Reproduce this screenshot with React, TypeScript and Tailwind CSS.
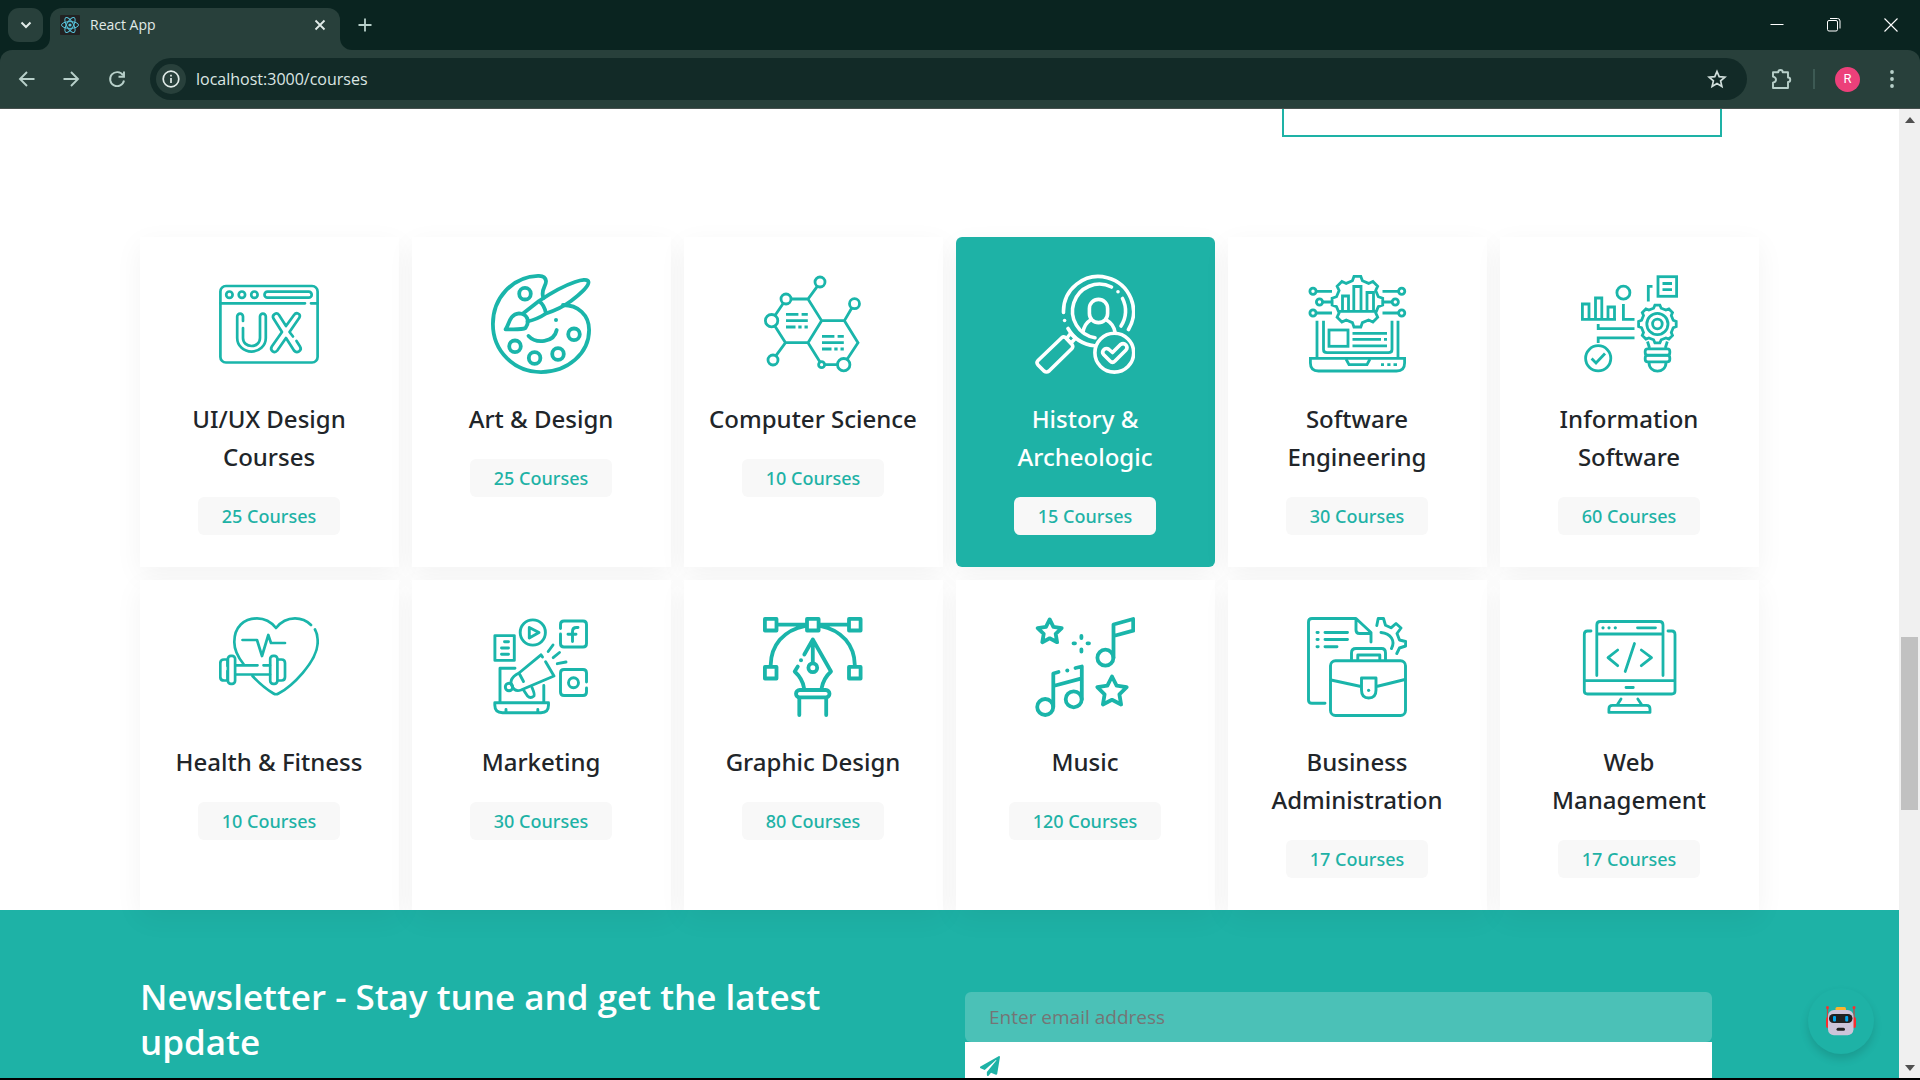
import type { ReactNode } from "react";

function gearPath(cx: number, cy: number, outer: number, inner: number, teeth: number) {
  const step = (Math.PI * 2) / teeth;
  const points: string[] = [];
  for (let i = 0; i < teeth; i++) {
    const a = i * step - Math.PI / 2;
    const corners: [number, number][] = [
      [inner, a - step * 0.3],
      [outer, a - step * 0.17],
      [outer, a + step * 0.17],
      [inner, a + step * 0.3],
    ];
    for (const [r, t] of corners) {
      points.push(`${(cx + r * Math.cos(t)).toFixed(1)} ${(cy + r * Math.sin(t)).toFixed(1)}`);
    }
  }
  return `M${points.join("L")}Z`;
}

function starPath(cx: number, cy: number, outer: number) {
  const points: string[] = [];
  for (let i = 0; i < 10; i++) {
    const r = i % 2 ? outer * 0.5 : outer;
    const t = (i * Math.PI) / 5 - Math.PI / 2;
    points.push(`${(cx + r * Math.cos(t)).toFixed(1)} ${(cy + r * Math.sin(t)).toFixed(1)}`);
  }
  return `M${points.join("L")}Z`;
}

function Art({ width, square, children }: { width: number; square?: boolean; children: ReactNode }) {
  return (
    <svg
      viewBox="0 0 100 100"
      className="size-[100px]"
      fill="none"
      stroke="currentColor"
      strokeWidth={width}
      strokeLinecap={square ? "butt" : "round"}
      strokeLinejoin={square ? "miter" : "round"}
      aria-hidden="true"
    >
      {children}
    </svg>
  );
}

const Dot = ({ x, y, r = 1.8 }: { x: number; y: number; r?: number }) => (
  <circle cx={x} cy={y} r={r} fill="currentColor" stroke="none" />
);

const UxIcon = () => (
  <Art width={2.7}>
    <rect x="1.4" y="12" width="97.2" height="76.5" rx="5.5" />
    <path d="M1.4 29.3H86M92 29.3H98.6" />
    <circle cx="10.4" cy="20.7" r="3.2" />
    <circle cx="22.9" cy="20.7" r="3.2" />
    <circle cx="35.4" cy="20.7" r="3.2" />
    <rect x="45.5" y="17.7" width="47.2" height="6" rx="3" />
    <path d="M24 47V42.5a2.9 2.9 0 0 0-5.8 0V64C18.2 72 25 77.6 32.5 77.6S46.8 72 46.8 64V42.5a2.9 2.9 0 0 0-5.8 0V64C41 69 37 72 32.5 72S24 69 24 64V54" />
    <path d="M67 52L60 41C57.5 37.5 52.5 41 54.5 44.5L63 58L52.8 72.5C50.5 76.5 55.5 80 58.3 76.5L67 64L75 76.5C78 80 83.5 76.5 81 72.5L77.5 67M74 62.5L70.5 58L80.5 43.5C82 40 77.5 37.5 75 41L67 52" />
  </Art>
);

const PaletteIcon = () => (
  <Art width={3.8}>
    <path d="M52.5 24C49 16 55.5 12 55 7C54.5 3 51 1.8 47 1.9C21 3 1.9 24 1.9 50C1.9 77 23 98.1 50 98.1C77 98.1 98.1 79 98.1 56C98.1 41 87 31 72 31" />
    <circle cx="34" cy="19.7" r="5.8" />
    <circle cx="24" cy="72.3" r="5.8" />
    <circle cx="43.6" cy="84" r="5.8" />
    <circle cx="67" cy="80" r="5.8" />
    <circle cx="83" cy="60.3" r="5.8" />
    <path d="M37.5 62C45 70 63 69 65.7 56" />
    <Dot x={65} y={46} r={2} />
    <path d="M14.5 55.3C18 52 18 40 28 39.3C36 39.5 39.5 47 34.5 54C31 56 21 55.3 14.5 55.3Z" />
    <path d="M32 39.5L48 27C52 30 54 34 55 39.5C49 43.5 43 46 36.5 47.5M48 27C60 19 72 12 84 8C90 6 97 4.5 97.5 8C98 12 88 21 80 27C72 33 64 36.5 55 39.5" />
  </Art>
);

const MoleculeIcon = () => (
  <Art width={2.8} square>
    <circle cx="57" cy="8" r="5" />
    <circle cx="91.5" cy="29.7" r="5" />
    <circle cx="23" cy="25" r="5" />
    <circle cx="8.6" cy="46.7" r="6.2" />
    <circle cx="10" cy="86" r="5" />
    <circle cx="58.6" cy="90.7" r="3" />
    <circle cx="80.7" cy="90.7" r="6.2" />
    <path d="M28 25H45L54.3 12.3M45 25L58.6 46.7H81.4L88.8 34M81.4 46.7L95 68.7L84 85.5M58.6 46.7L45 68.7L57 88M45 68.7H22.5L12.8 81.8M22.5 68.7L12 52.2M12 41.5L20.3 29.3M61.5 90.7H74.5" />
    <path d="M23 40.3H35.4M38.6 40.3H44.8M23 46.7H44.8M23 53H32.5M35.3 53H38.6M41.5 53H44.8" />
    <path d="M59 62.3H71.4M74.6 62.3H80.8M59 68.7H80.8M59 75H68.5M71.3 75H74.6M77.5 75H80.8" />
  </Art>
);

const MagnifierIcon = () => (
  <Art width={3.6}>
    <path d="M28.5 38.5A35 35 0 1 1 93.5 55.5M33 54.5A35 35 0 0 0 59.5 71.8" />
    <path d="M76.5 13A27 27 0 1 0 60 63.8M87.5 24.5A27 27 0 0 1 86 52" />
    <Dot x={29.6} y={46.5} />
    <Dot x={83} y={17.7} />
    <rect x="54.4" y="25.4" width="18.2" height="23.2" rx="9.1" />
    <path d="M48 58C49 52 51.5 48.5 55.5 46M71.5 46C76 48.5 79 53 80 58" />
    <path d="M27 63.5Q29 62 31 64L37 70.5Q38.5 72.5 37 74.5L14 97Q11.5 99 9 97L3 91Q1 88.5 3 86.5Z" />
    <path d="M35.5 59.5L40.5 64.3L36 69L31.5 64.5Z" />
    <circle cx="79.3" cy="78.7" r="19.4" />
    <path d="M77.5 78.5L85.5 70.5Q88.5 68.5 91 71Q93 73.5 91 76L80 87Q77.5 89.5 75 87L68.5 80.5Q66.5 78 69 75.5Q71.5 73.5 74 75.5Z" />
  </Art>
);

const EngineeringIcon = () => (
  <Art width={2.8} square>
    <path d={gearPath(50.4, 27.7, 25.5, 21.5, 8)} />
    <path d="M31 37.3H70M35.5 37V22H41.5V37M46.8 37V12.5H54V37M60 37V18.5H66.5V37" />
    <path d="M9.3 17.3H25M15.8 28H25M9.3 39H25M91.5 17.3H75.5M85 28H76M91.5 39H75.5" />
    <circle cx="6" cy="17.3" r="3.1" />
    <circle cx="12.5" cy="28" r="3.1" />
    <circle cx="6" cy="39" r="3.1" />
    <circle cx="94.7" cy="17.3" r="3.1" />
    <circle cx="88.3" cy="28" r="3.1" />
    <circle cx="94.7" cy="39" r="3.1" />
    <path d="M10 46.7V84M91 46.7V84M16.5 46.7V75.5Q16.5 78.7 20 78.7H81.5Q85 78.7 85 75.5V46.7" />
    <path d="M3.4 84.4H97.6V89Q97.6 97 89.5 97H11.5Q3.4 97 3.4 89Z" />
    <path d="M39 85L42 90.7H60L63 85M74 90.7H77M80.3 90.7H83.5M86.5 90.7H90" />
    <rect x="22" y="56" width="19" height="16.3" />
    <path d="M45.5 59.3H80M45.5 65.3H74M77 65.3H80M45.5 71.8H80" />
  </Art>
);

const InformationIcon = () => (
  <Art width={2.8} square>
    <path d="M2 45.4H37M3.4 45V30H10V45M16.5 45V24H22.8V45M29 45V33H35.5V45" />
    <circle cx="44.4" cy="18.7" r="6.5" />
    <path d="M44.4 30V45.4H55.5M19.2 50V54.7H55.5M19.2 69V63.9H55.5" />
    <circle cx="19.2" cy="84.3" r="12.6" />
    <path d="M12.6 84.5L17 89L26 79.5" />
    <rect x="79" y="2.7" width="18.6" height="19.6" />
    <path d="M83.5 9.5H93M83.5 15.7H93M73.5 12.3H69.3V27.5" />
    <path d={gearPath(78.4, 50, 19, 16.3, 8)} />
    <circle cx="78.4" cy="50" r="10.6" />
    <circle cx="78.4" cy="50" r="4.8" />
    <path d="M68.5 67.5L70.5 74M88.3 67.5L86.3 74" />
    <rect x="66.2" y="74.8" width="24.6" height="6.4" rx="2.5" />
    <rect x="66.2" y="81.4" width="24.6" height="6.4" rx="2.5" />
    <path d="M70 88.5C70 100 87 100 87 88.5" />
  </Art>
);

const HealthIcon = () => (
  <Art width={2.7}>
    <path d="M24.5 47C18 39 15.3 31 15.3 25C15.3 10 25 1.4 38 1.4C47 1.4 53 6 57 11C61 6 67 1.4 76 1.4C83 1.4 88 4 92 8M96 12.5C98 16 98.7 20 98.7 25C98.7 45 72 70 59.5 76.5Q57 78 54.5 76.5C47 72 40 66 33.5 59" />
    <path d="M23.5 23H38L43 39L49.3 18L52 26H66" />
    <path d="M8.5 49V42.5H5Q1.3 42.5 1.3 46V60Q1.3 63.5 5 63.5H8.5V54" />
    <rect x="8.9" y="38.8" width="7.2" height="28" rx="3" />
    <rect x="51.2" y="38.8" width="7.2" height="28" rx="3" />
    <path d="M59 42.5H62.5Q66 42.5 66 46V60Q66 63.5 62.5 63.5H59M17 48.3H38.5M44.5 48.3H51M17 57.5H51" />
  </Art>
);

const MarketingIcon = () => (
  <Art width={2.9}>
    <circle cx="41.8" cy="15.5" r="12.6" />
    <path d="M38.3 10.5L48 15.5L38.3 21Z" />
    <path d="M69.5 11.5V7.5Q69.5 4 73 4H92Q95.5 4 95.5 7.5V26.5Q95.5 30 92 30H73Q69.5 30 69.5 26.5V17" />
    <path d="M87 10.5H85.5Q81.5 10.5 81.5 14.5V24.5M77 17.3H85" />
    <path d="M3.9 18.6H23.3V43.4H3.9ZM13.5 24.7H17.5M10.5 31H17.5M10.5 37.3H17.5" />
    <path d="M24 51.3H9V85M52.8 68.5V85" />
    <path d="M3.8 85.7H57.5V88Q57.5 95.7 50 95.7H11.5Q3.8 95.7 3.8 88ZM15 92.5V95M46.8 92.5V95" />
    <path d="M51.5 40L50 37.8L28 56C20 60 17 66 23.5 72.5Q26 74.5 30 73L63 59L54.6 44.7M28.5 57L32.5 64.5" />
    <circle cx="18" cy="70" r="3.7" />
    <path d="M32.5 73L36.5 79Q39.5 82 43 79Q44 77.5 41 70.5" />
    <path d="M57.2 34.5L62 28M62.2 40.7L68.5 35.5M66.3 46.7L75 45" />
    <path d="M95.5 65V56Q95.5 52.5 92 52.5H73Q69.5 52.5 69.5 56V75Q69.5 78.5 73 78.5H92Q95.5 78.5 95.5 75V71" />
    <circle cx="82.5" cy="65.7" r="5" />
  </Art>
);

const PenIcon = () => (
  <Art width={3.8}>
    <rect x="1.9" y="1.9" width="11.6" height="11.6" />
    <rect x="44" y="1.9" width="11.6" height="11.6" />
    <rect x="86" y="1.9" width="11.6" height="11.6" />
    <rect x="1.9" y="49.9" width="11.6" height="11.6" />
    <rect x="86" y="49.9" width="11.6" height="11.6" />
    <path d="M15 7.7H43M57 7.7H85M42.5 8.8C20 13 8 29 7.7 48M57 8.8C79.5 13 91.5 29 91.8 48" />
    <path d="M41.3 37.5L49.8 22.5L68 54.5C63 59 60 64 58.7 71M41 71C40 64 36 58.5 31.7 54.5L34.8 49.5M49.8 24V45" />
    <Dot x={38} y={43.3} r={2} />
    <circle cx="49.8" cy="50.7" r="4.4" />
    <rect x="33" y="73" width="33.5" height="7.4" rx="3.7" />
    <path d="M36.3 81V98M63.2 81V98" />
  </Art>
);

const MusicIcon = () => (
  <Art width={3.8}>
    <path d={starPath(14.7, 15, 12.6)} />
    <path d={starPath(77, 75, 15.5)} />
    <path d="M46.4 19V21M46.4 32.5V34.5M38.5 26.3H40M52.5 26.3H54" />
    <circle cx="70.4" cy="40.7" r="8" />
    <path d="M78.5 40.7V7.5L98.2 2V13.7L78.5 19" />
    <circle cx="10.2" cy="90" r="8" />
    <circle cx="38.7" cy="82.3" r="8" />
    <path d="M18.3 90V56.5L23.5 55M40.5 51L46.8 49.5V82.3M18.3 69L46.8 61.3" />
    <Dot x={32.3} y={53.5} r={2} />
  </Art>
);

const BusinessIcon = () => (
  <Art width={2.9}>
    <path d="M18 86.3H5Q1.5 86.3 1.5 83V5Q1.5 1.5 5 1.5H49L64 15.5V25M49 2.5V13Q49 16.5 52.5 16.5H63" />
    <path d="M10 15.5H11.2M10 22.5H11.2M10 29.7H11.2M18 15.5H40.5M18 22.5H40.5M18 29.7H30" />
    <path d="M69.8 8.5L71.2 1.5H76.5L78.5 8.3L84 10.8L89 6.5L94 11L90 16.5L92.5 23L98.6 24.5V29L92.5 31L89.8 36.5M74 15.5C84 16.5 88.5 24 84.5 31.5" />
    <rect x="23.5" y="43.8" width="75" height="54.7" rx="5" />
    <path d="M44.5 43V36Q44.5 31.5 49 31.5H74.5Q78.5 31.5 78.5 36V43M50.8 43V38H72.8V43" />
    <path d="M24 63L54 69.5M69.5 69.5L98 62.5M54.5 61H69V73Q69 81 61.7 81Q54.5 81 54.5 73Z" />
    <Dot x={61.6} y={73.3} r={1.6} />
  </Art>
);

const WebIcon = () => (
  <Art width={2.8}>
    <path d="M12 14H8.5Q5.3 14 5.3 17.5V74Q5.3 77 8.5 77H92.8Q96 77 96 74V17.5Q96 14 92.8 14H89M5.3 63.7H96M17.8 58.5V8Q17.8 4.5 21.3 4.5H80.5Q84 4.5 84 8V58.5M17.8 17H84" />
    <path d="M58.5 10.8H76.5M38.7 33L29 40.7L38.7 48.7M55.5 26.5L46.2 54.5M62.3 33L72.5 40.7L62.3 48.7M47 70.5H54.3" />
    <Dot x={24} y={10.8} r={1.6} />
    <Dot x={30} y={10.8} r={1.6} />
    <Dot x={36.3} y={10.8} r={1.6} />
    <path d="M42 82L38.5 87.5M58.8 82L62.5 87.5M29.9 95.4V92Q29.9 88.4 33.5 88.4H67.5Q71 88.4 71 92V95.4Z" />
  </Art>
);

const courses = [
  { title: "UI/UX Design Courses", count: 25, icon: <UxIcon /> },
  { title: "Art & Design", count: 25, icon: <PaletteIcon /> },
  { title: "Computer Science", count: 10, icon: <MoleculeIcon /> },
  { title: "History & Archeologic", count: 15, icon: <MagnifierIcon />, active: true },
  { title: "Software Engineering", count: 30, icon: <EngineeringIcon /> },
  { title: "Information Software", count: 60, icon: <InformationIcon /> },
  { title: "Health & Fitness", count: 10, icon: <HealthIcon /> },
  { title: "Marketing", count: 30, icon: <MarketingIcon /> },
  { title: "Graphic Design", count: 80, icon: <PenIcon /> },
  { title: "Music", count: 120, icon: <MusicIcon /> },
  { title: "Business Administration", count: 17, icon: <BusinessIcon /> },
  { title: "Web\nManagement", count: 17, icon: <WebIcon /> },
];

function CourseCard({ title, count, icon, active }: (typeof courses)[number]) {
  return (
    <article
      className={`flex flex-col items-center pt-[37px] pr-[17px] pb-8 pl-4 text-center shadow-[0_8px_27px_rgba(0,0,0,0.05)] ${
        active ? "rounded-md bg-[#1eb2a6] text-white" : "bg-white text-[#212529]"
      }`}
    >
      <div className={active ? "text-white" : "text-[#1ab5aa]"}>{icon}</div>
      <h3 className="mt-[26px] max-w-[216px] font-['Noto_Sans'] text-2xl leading-[38px] font-medium whitespace-pre-line">
        {title}
      </h3>
      <span className="mt-[21px] rounded-md bg-[#f8f8f8] px-6 font-['Noto_Sans'] text-lg leading-[38px] font-medium text-[#1eb2a6]">
        {count} Courses
      </span>
    </article>
  );
}

function BrowserChrome() {
  return (
    <header className="bg-[#0a2420] text-[#e1ebe8]">
      <div className="flex h-[50px] items-end">
        <button aria-label="Search tabs" className="mb-2 ml-2 flex h-[34px] w-[35px] items-center justify-center rounded-[11px] bg-[#28403b]">
          <svg viewBox="0 0 12 12" className="size-3" fill="none" stroke="currentColor" strokeWidth="2" aria-hidden="true">
            <path d="M1.5 3.5L6 8L10.5 3.5" />
          </svg>
        </button>
        <div className="ml-[-5px] size-3 overflow-hidden">
          <div className="size-3 rounded-br-[12px] shadow-[4px_4px_0_4px_#28403b]" />
        </div>
        <div className="flex h-[42px] w-[290px] items-center rounded-t-[12px] bg-[#28403b] px-[10px] pb-2">
          <svg viewBox="0 0 20 20" className="size-5" fill="none" stroke="#58c4dc" aria-hidden="true">
            <rect width="20" height="20" rx="1" fill="#222222" stroke="none" />
            <ellipse cx="10" cy="10" rx="8.5" ry="3.4" />
            <ellipse cx="10" cy="10" rx="8.5" ry="3.4" transform="rotate(60 10 10)" />
            <ellipse cx="10" cy="10" rx="8.5" ry="3.4" transform="rotate(120 10 10)" />
            <circle cx="10" cy="10" r="1.6" fill="#58c4dc" stroke="none" />
          </svg>
          <span className="ml-[10px] flex-1 text-sm">React App</span>
          <button aria-label="Close tab" className="mr-1">
            <svg viewBox="0 0 12 12" className="size-3" stroke="currentColor" strokeWidth="1.8" aria-hidden="true">
              <path d="M1.5 1.5L10.5 10.5M10.5 1.5L1.5 10.5" />
            </svg>
          </button>
        </div>
        <div className="size-3 overflow-hidden">
          <div className="size-3 rounded-bl-[12px] shadow-[-4px_4px_0_4px_#28403b]" />
        </div>
        <button aria-label="New tab" className="mb-[18px] ml-1.5">
          <svg viewBox="0 0 14 14" className="size-[14px]" stroke="#b8d0ca" strokeWidth="1.8" aria-hidden="true">
            <path d="M7 .5V13.5M.5 7H13.5" />
          </svg>
        </button>
        <div className="mb-[18px] ml-auto flex gap-[43px] pr-[22px]">
          <button aria-label="Minimize">
            <svg viewBox="0 0 14 14" className="size-[14px]" stroke="#ffffff" aria-hidden="true">
              <path d="M.5 6.5H13.5" />
            </svg>
          </button>
          <button aria-label="Restore">
            <svg viewBox="0 0 14 14" className="size-[14px]" fill="none" stroke="#ffffff" aria-hidden="true">
              <rect x=".5" y="2.5" width="10" height="10.5" rx="1.5" />
              <path d="M3 .5H10.5Q13 .5 13 3V10.5" />
            </svg>
          </button>
          <button aria-label="Close">
            <svg viewBox="0 0 14 14" className="size-[14px]" stroke="#ffffff" strokeWidth="1.1" aria-hidden="true">
              <path d="M.5 .5L13.5 13.5M13.5 .5L.5 13.5" />
            </svg>
          </button>
        </div>
      </div>
      <div className="flex h-[59px] items-center rounded-t-[12px] border-b border-[#47504e] bg-[#28403b] pr-[26px] pl-[18px] text-[#b8d0ca]">
        <button aria-label="Back">
          <svg viewBox="0 0 18 18" className="size-[18px]" fill="none" stroke="currentColor" strokeWidth="1.9" aria-hidden="true">
            <path d="M16.5 9H2.5M9 2L2 9L9 16" />
          </svg>
        </button>
        <button aria-label="Forward" className="ml-[26px]">
          <svg viewBox="0 0 18 18" className="size-[18px]" fill="none" stroke="currentColor" strokeWidth="1.9" aria-hidden="true">
            <path d="M1.5 9H15.5M9 2L16 9L9 16" />
          </svg>
        </button>
        <button aria-label="Reload" className="ml-7">
          <svg viewBox="0 0 18 18" className="size-[18px]" fill="none" stroke="currentColor" strokeWidth="1.9" aria-hidden="true">
            <path d="M15 5.3A7 7 0 1 0 16 10.5M16 1.5V6.8H10.5" />
          </svg>
        </button>
        <div className="ml-6 flex h-[42px] flex-1 items-center rounded-full bg-[#122a27] pr-5 pl-1.5">
          <button aria-label="Site information" className="flex size-[30px] items-center justify-center rounded-full bg-[#28403b] text-[#e1ebe8]">
            <svg viewBox="0 0 18 18" className="size-[18px]" fill="none" stroke="currentColor" strokeWidth="1.7" aria-hidden="true">
              <circle cx="9" cy="9" r="7.8" />
              <path d="M9 8V13M9 4.8V6.6" />
            </svg>
          </button>
          <input
            aria-label="Address"
            readOnly
            value="localhost:3000/courses"
            className="ml-[10px] flex-1 bg-transparent text-base text-[#dce6e3] outline-none"
          />
          <button aria-label="Bookmark this tab">
            <svg viewBox="0 0 20 20" className="size-5" fill="none" stroke="#d0dedb" strokeWidth="1.7" strokeLinejoin="miter" aria-hidden="true">
              <path d="M10 2.5L12.2 7.7L17.9 8.2L13.6 11.9L14.9 17.4L10 14.5L5.1 17.4L6.4 11.9L2.1 8.2L7.8 7.7Z" />
            </svg>
          </button>
        </div>
        <button aria-label="Extensions" className="ml-6">
          <svg viewBox="0 0 22 22" className="size-[22px]" fill="none" stroke="currentColor" strokeWidth="1.9" strokeLinejoin="round" aria-hidden="true">
            <path d="M2 4.2H7.3A2.2 2.2 0 0 1 11.7 4.2H17V9.5A2.2 2.2 0 0 1 17 14V20H2V14.6C6 13.5 6 9.8 2 8.7Z" />
          </svg>
        </button>
        <div className="ml-5 h-5 w-0.5 bg-[#3d5a54]" />
        <button aria-label="Profile" className="ml-5 flex size-[25px] items-center justify-center rounded-full bg-[#ec407a] font-[Roboto] text-[13px] text-white">
          R
        </button>
        <button aria-label="Menu" className="ml-[30px]">
          <svg viewBox="0 0 4 18" className="h-[18px] w-1" fill="currentColor" aria-hidden="true">
            <circle cx="2" cy="2" r="1.9" />
            <circle cx="2" cy="9" r="1.9" />
            <circle cx="2" cy="16" r="1.9" />
          </svg>
        </button>
      </div>
    </header>
  );
}

function Newsletter() {
  return (
    <section className="grid flex-1 grid-cols-2 gap-[30px] bg-[#1eb2a6] pr-[139px] pl-[140px]">
      <h2 className="pt-16 text-[35px] leading-[45px] font-semibold text-white">
        Newsletter - Stay tune and get the latest update
      </h2>
      <form className="mt-[82px] mr-12">
        <input
          type="email"
          aria-label="Email address"
          placeholder="Enter email address"
          className="block h-[50px] w-full rounded-md bg-white/20 px-6 text-[19px] text-white placeholder:text-[#757575]"
        />
        <button type="button" aria-label="Subscribe" className="flex h-[50px] w-full items-start bg-white pt-[14px] pl-[15px] text-[#1eb2a6]">
          <svg viewBox="0 0 512 512" className="size-5" fill="currentColor" aria-hidden="true">
            <path d="M476 3.2L12.5 270.6c-18.1 10.4-15.8 35.6 2.2 43.2L121 358.4l287.3-253.2c5.5-4.9 13.3 2.6 8.6 8.3L176 407v80.5c0 23.6 28.5 32.9 42.5 15.8L282 426l124.6 52.2c14.2 6 30.4-2.9 33-18.2l72-432C515 7.8 493.3-6.8 476 3.2z" />
          </svg>
        </button>
      </form>
    </section>
  );
}

function ChatButton() {
  return (
    <button
      aria-label="Open chat"
      className="absolute right-[25px] bottom-6 z-20 flex size-[66px] items-center justify-center rounded-full bg-[#1eb2a6] shadow-[0_5px_9px_rgba(0,0,0,0.13)]"
    >
      <svg viewBox="0 0 30 30" className="size-[30px]" aria-hidden="true">
        <path d="M1.5 1.5V14M28 1.5V14" stroke="#c9443f" strokeWidth="1.2" />
        <circle cx="1.5" cy="1.5" r="1.5" fill="#f92f2f" />
        <circle cx="28" cy="1.5" r="1.5" fill="#f92f2f" />
        <rect x="0" y="11" width="4" height="11" rx="2" fill="#f92f2f" />
        <rect x="26" y="11" width="4" height="11" rx="2" fill="#f92f2f" />
        <rect x="9.5" y="1" width="10.5" height="5" rx="1.5" fill="#fcb42e" />
        <rect x="2" y="4" width="25.5" height="25.3" rx="6" fill="#cdc4d9" />
        <rect x="3" y="8" width="23.5" height="9" rx="4.5" fill="#212121" />
        <rect x="7" y="10" width="3" height="5.5" rx="1" fill="#00a6ed" />
        <rect x="19.2" y="10" width="3" height="5.5" rx="1" fill="#00a6ed" />
        <rect x="10.5" y="21.7" width="8.5" height="3" rx="1.5" fill="#212121" />
      </svg>
    </button>
  );
}

function Scrollbar() {
  return (
    <div className="flex w-[21px] flex-col items-center bg-[#f0f0f0]" aria-hidden="true">
      <svg viewBox="0 0 10 6" className="mt-2 h-[6px] w-[10px]" fill="#505050">
        <path d="M5 0L10 6H0Z" />
      </svg>
      <div className="flex-[514]" />
      <div className="w-[17px] flex-[173] bg-[#c1c1c1]" />
      <div className="flex-[255]" />
      <svg viewBox="0 0 10 6" className="mb-[7px] h-[6px] w-[10px]" fill="#505050">
        <path d="M5 6L10 0H0Z" />
      </svg>
    </div>
  );
}

export default function App() {
  return (
    <div className="flex h-screen flex-col overflow-hidden border-b-2 border-black bg-white font-['Open_Sans',sans-serif]">
      <BrowserChrome />
      <div className="flex min-h-0 flex-1">
        <main className="relative flex min-w-0 flex-1 flex-col overflow-hidden">
          <div className="mr-[177px] h-7 w-[440px] shrink-0 self-end border-x-2 border-b-2 border-[#1eb2a6]" />
          <section className="relative z-10 mt-[100px] grid shrink-0 grid-cols-6 gap-[13px] px-[140px]">
            {courses.map((course) => (
              <CourseCard key={course.title} {...course} />
            ))}
          </section>
          <Newsletter />
          <ChatButton />
        </main>
        <Scrollbar />
      </div>
    </div>
  );
}
